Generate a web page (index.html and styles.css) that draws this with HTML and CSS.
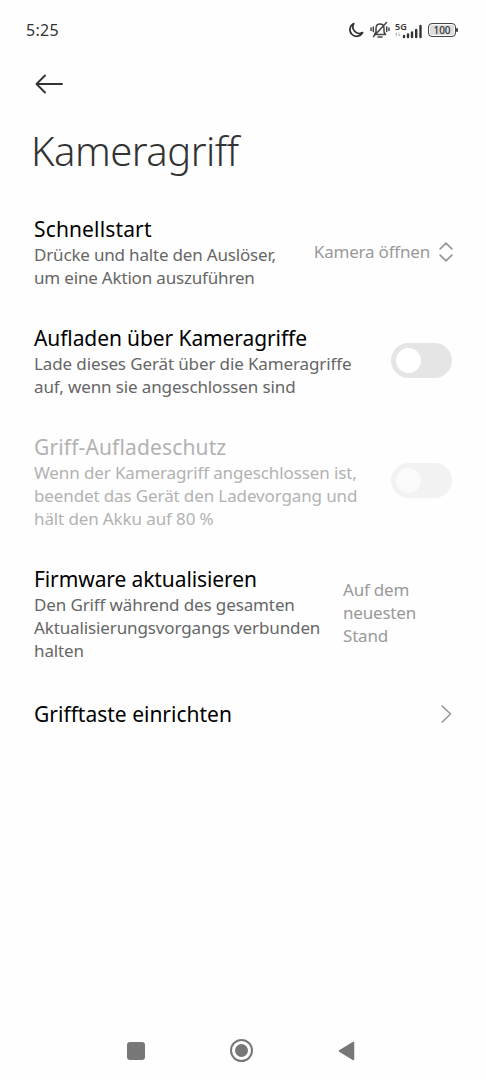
FILE: index.html
```html
<!DOCTYPE html>
<html lang="de">
<head>
    <meta charset="UTF-8">
    <meta name="viewport" content="width=device-width, initial-scale=1.0">
    <title>Kameragriff</title>
    <link rel="stylesheet" href="styles.css">
</head>
<body>
    <div class="statusBar">
        <div class="clock">5:25</div>
        <div class="statusIcons">
            <svg class="moon" width="16" height="16" viewBox="0 0 16 16">
                <path d="M5.800 1.500A6.700 6.700 0 1 0 14.600 10.600A6.600 6.600 0 0 1 5.800 1.500Z"/>
            </svg>
            <svg class="mute" width="20" height="18" viewBox="0 0 20 18">
                <path d="M5 13.500H15.500L14 11V7.500C14 4.800 12.300 3 10 3S6 4.800 6 7.500V11L4.500 13.500M8 16h4M3.500 15.500L16.500 1.500M3.300 6v4.500M1 7v2.500M16.700 6v4.500M19 7v2.500"/>
            </svg>
            <div class="signal">
                <span class="network">5G</span>
                <svg width="28" height="17" viewBox="0 0 28 17">
                    <path class="data" d="M1.500 14v-3l-1 1M4 11v3l1-1"/>
                    <path class="bars" d="M9 15v-1M13 15v-2.500M17 15v-4.500M21.200 15V8M25.500 15V4"/>
                </svg>
            </div>
            <div class="battery">100</div>
        </div>
    </div>

    <div class="backBar">
        <svg width="28" height="20" viewBox="0 0 28 20">
            <path d="M10 1.500L1.500 10L10 18.500M1.500 10H27"/>
        </svg>
    </div>

    <h1 class="pageTitle">Kameragriff</h1>

    <div class="settings">
        <div class="row">
            <div class="rowText">
                <div class="rowTitle loose">Schnellstart</div>
                <div class="rowInfo tight">Drücke und halte den Auslöser,<br>um eine Aktion auszuführen</div>
            </div>
            <div class="rowValue">Kamera öffnen</div>
            <svg class="updown" width="14" height="20" viewBox="0 0 14 20">
                <path d="M1.200 6.800L7 1.200L12.800 6.800M1.200 13.200L7 18.800L12.800 13.200"/>
            </svg>
        </div>
        <div class="row">
            <div class="rowText">
                <div class="rowTitle tight">Aufladen über Kameragriffe</div>
                <div class="rowInfo">Lade dieses Gerät über die Kameragriffe<br>auf, wenn sie angeschlossen sind</div>
            </div>
            <div class="toggle"></div>
        </div>
        <div class="row disabled">
            <div class="rowText">
                <div class="rowTitle loose">Griff-Aufladeschutz</div>
                <div class="rowInfo">Wenn der Kameragriff angeschlossen ist,<br>beendet das Gerät den Ladevorgang und<br>hält den Akku auf 80 %</div>
            </div>
            <div class="toggle"></div>
        </div>
        <div class="row">
            <div class="rowText">
                <div class="rowTitle tight">Firmware aktualisieren</div>
                <div class="rowInfo">Den Griff während des gesamten<br>Aktualisierungsvorgangs verbunden<br>halten</div>
            </div>
            <div class="rowValue wide">Auf dem<br>neuesten<br>Stand</div>
        </div>
        <div class="row">
            <div class="rowText">
                <div class="rowTitle">Grifftaste einrichten</div>
            </div>
            <svg class="chevron" width="11" height="18" viewBox="0 0 11 18">
                <path d="M1.200 1L9.500 9L1.200 17"/>
            </svg>
        </div>
    </div>

    <div class="navBar">
        <div class="recent"></div>
        <div class="home"></div>
        <svg width="18" height="20" viewBox="0 0 18 20">
            <path d="M1.500 10L15.500 1.500V18.500Z"/>
        </svg>
    </div>
</body>
</html>
```
FILE: styles.css
```css
* {
    box-sizing: border-box;
}

body {
    margin: 0;
    height: 1080px;
    display: flex;
    flex-direction: column;
    background-color: #fefefe;
    color: #000;
    font-family: "Noto Sans", sans-serif;
    overflow: hidden;
}

svg {
    fill: none;
    stroke-linecap: round;
    stroke-linejoin: round;
    flex: none;
}

.statusBar {
    height: 60px;
    padding: 0 28px 0 26px;
    display: flex;
    align-items: center;
    justify-content: space-between;
    color: #333;
}

.clock {
    font-size: 16px;
    letter-spacing: 0.3px;
}

.statusIcons {
    display: flex;
    align-items: center;
}

.moon {
    stroke: #333;
    stroke-width: 1.7;
    margin-right: 6px;
}

.mute {
    stroke: #444;
    stroke-width: 1.5;
    margin-right: 5px;
}

.signal {
    position: relative;
    height: 17px;
    margin-right: 5px;
}

.signal svg {
    display: block;
}

.network {
    position: absolute;
    left: 0;
    top: 0;
    font-size: 9px;
    line-height: 10px;
    font-weight: 600;
}

.data {
    stroke: #aaa;
    stroke-width: 0.8;
}

.bars {
    stroke: #333;
    stroke-width: 2.4;
}

.battery {
    position: relative;
    width: 28px;
    height: 14px;
    border: 1.5px solid #444;
    border-radius: 4px;
    box-shadow: inset 0 0 0 1px #fefefe;
    background-color: #ddd;
    font-size: 10px;
    line-height: 12px;
    font-weight: 500;
    text-align: center;
    margin-right: 2px;
}

.battery::after {
    content: "";
    position: absolute;
    right: -3px;
    top: 4px;
    width: 2px;
    height: 4px;
    border-radius: 1px;
    background-color: #444;
}

.backBar {
    height: 48px;
    padding-left: 35px;
    display: flex;
    align-items: center;
}

.backBar svg {
    stroke: #333;
    stroke-width: 1.9;
}

.pageTitle {
    margin: 0;
    padding: 15px 0 0 31px;
    height: 89px;
    font-size: 40px;
    line-height: 56px;
    font-weight: 300;
    letter-spacing: -0.5px;
    color: #333;
}

.settings {
    flex: 1;
    padding: 0 34px;
}

.row {
    min-height: 69px;
    padding: 18px 0 17px;
    display: flex;
    align-items: center;
}

.rowText {
    flex: 1;
    white-space: nowrap;
}

.rowTitle {
    font-size: 21px;
    line-height: 28px;
}

.rowTitle.tight {
    letter-spacing: -0.1px;
}

.rowTitle.loose {
    letter-spacing: 0.14px;
}

.rowInfo {
    font-size: 17px;
    line-height: 23px;
    letter-spacing: -0.12px;
    color: #666;
}

.rowInfo.tight {
    letter-spacing: -0.18px;
}

.rowValue {
    padding-bottom: 2px;
    font-size: 17px;
    line-height: 23px;
    letter-spacing: -0.2px;
    color: #999;
    white-space: nowrap;
}

.rowValue.wide {
    width: 109px;
}

.updown {
    margin-left: 9px;
    margin-bottom: 1px;
    margin-right: -1px;
    stroke: #999;
    stroke-width: 1.8;
}

.chevron {
    margin-bottom: 1px;
    stroke: #999;
    stroke-width: 1.7;
}

.toggle {
    width: 61px;
    height: 35px;
    margin-bottom: 2px;
    padding: 5px;
    border-radius: 18px;
    background-color: #e5e5e5;
}

.toggle::before {
    content: "";
    display: block;
    width: 25px;
    height: 25px;
    border-radius: 50%;
    background-color: #fff;
}

.disabled .rowTitle,
.disabled .rowInfo {
    color: #b2b2b2;
}

.disabled .toggle {
    background-color: #f2f2f2;
}

.disabled .toggle::before {
    background-color: #fafafa;
}

.navBar {
    height: 59px;
    padding: 0 130px 0 127px;
    display: flex;
    align-items: center;
    justify-content: space-between;
}

.recent {
    width: 18px;
    height: 18px;
    border-radius: 3px;
    background-color: #777;
}

.home {
    width: 23px;
    height: 23px;
    border: 2px solid #777;
    border-radius: 50%;
    padding: 3px;
}

.home::before {
    content: "";
    display: block;
    width: 13px;
    height: 13px;
    border-radius: 50%;
    background-color: #777;
}

.navBar svg path {
    fill: #777;
    stroke: #777;
    stroke-width: 1.5;
}
```
